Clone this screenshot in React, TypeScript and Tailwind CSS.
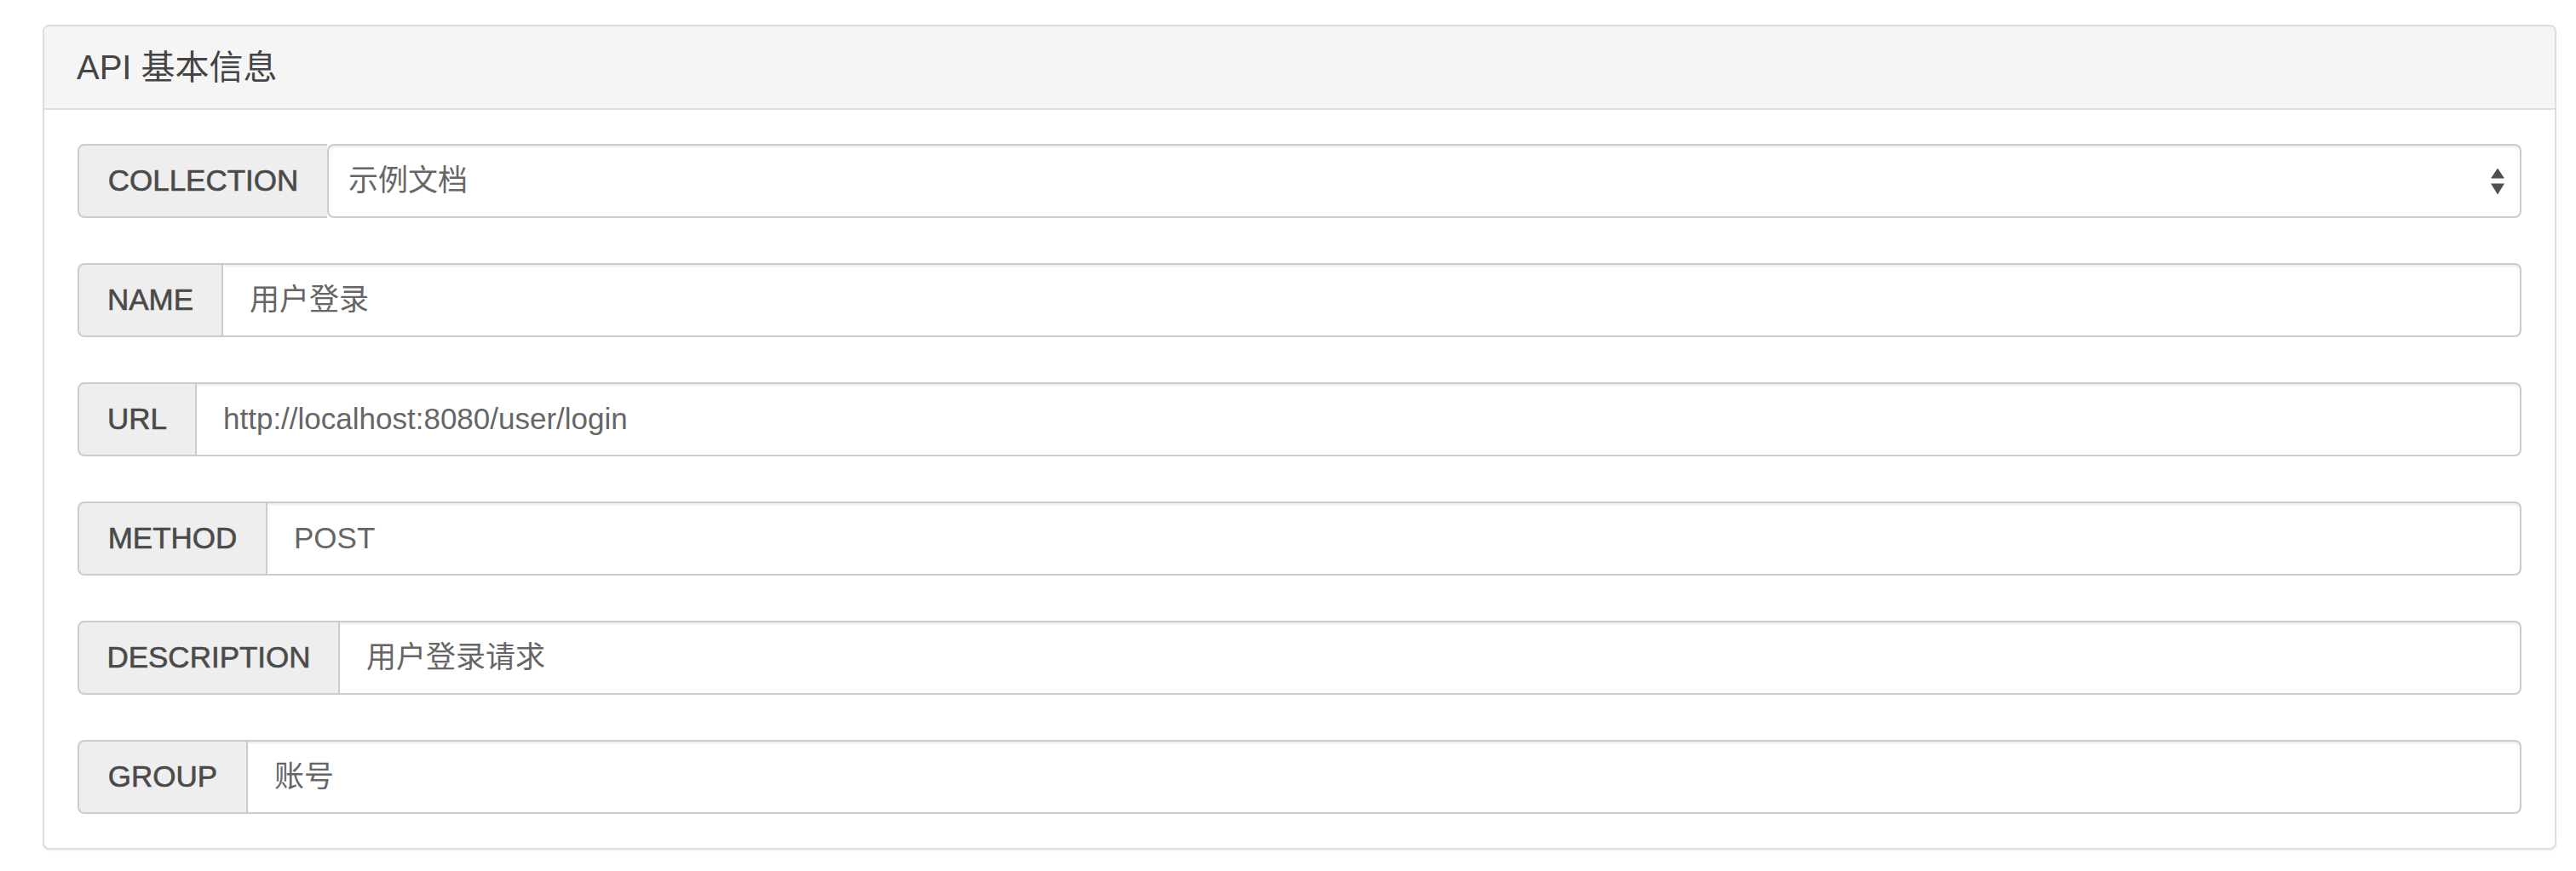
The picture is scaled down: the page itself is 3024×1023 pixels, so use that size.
import React from "react";

type Field = {
  label: string;
  value: string;
  addonWidth: string;
  select?: boolean;
};

const fields: Field[] = [
  { label: "COLLECTION", value: "示例文档", addonWidth: "w-[293px]", select: true },
  { label: "NAME", value: "用户登录", addonWidth: "w-[169px]" },
  { label: "URL", value: "http://localhost:8080/user/login", addonWidth: "w-[138px]" },
  { label: "METHOD", value: "POST", addonWidth: "w-[221px]" },
  { label: "DESCRIPTION", value: "用户登录请求", addonWidth: "w-[306px]" },
  { label: "GROUP", value: "账号", addonWidth: "w-[198px]" },
];

const fontStack =
  "font-['Liberation_Sans','Noto_Sans_CJK_SC',sans-serif]";

function SelectArrows() {
  return (
    <svg
      className="w-4 h-[31px]"
      viewBox="0 0 16 31"
      fill="#505050"
      aria-hidden="true"
    >
      <polygon points="0,12 8,0 16,12" />
      <polygon points="0,18 16,18 8,31" />
    </svg>
  );
}

function FieldRow({ field }: { field: Field }) {
  return (
    <div className="flex h-[87px]">
      {/* Label addon */}
      <div
        className={`${field.addonWidth} flex-shrink-0 flex items-center justify-center bg-[#eeeeee] border-2 border-r-0 border-[#cccccc] rounded-l-[8px] text-[35px] text-[#4a4a4a] [-webkit-text-stroke:0.6px_#4a4a4a]`}
      >
        {field.label}
      </div>

      {field.select ? (
        <div className="relative flex-1 flex items-center bg-white border-2 border-[#cccccc] rounded-[8px] shadow-[inset_0_2px_2px_rgba(0,0,0,0.075)] pl-[23px] text-[35px] text-[#666666]">
          {field.value}
          <div className="absolute right-[18px] top-1/2 -translate-y-1/2 flex">
            <SelectArrows />
          </div>
        </div>
      ) : (
        <input
          readOnly
          defaultValue={field.value}
          className={`flex-1 min-w-0 bg-white border-2 border-[#cccccc] rounded-r-[8px] shadow-[inset_0_2px_2px_rgba(0,0,0,0.075)] pl-[31px] text-[35px] text-[#666666] outline-none ${fontStack}`}
        />
      )}
    </div>
  );
}

export default function App() {
  return (
    <div
      className={`min-h-[1023px] w-[3024px] bg-white pt-[29px] pl-[50px] pr-[23px] ${fontStack}`}
    >
      <div className="border-2 border-[#dddddd] rounded-[8px] bg-white shadow-[0_2px_2px_rgba(0,0,0,0.05)]">
        {/* Panel heading */}
        <div className="h-[98px] flex items-center px-[38px] bg-[#f5f5f5] border-b-2 border-[#dddddd] rounded-t-[6px] text-[40px] text-[#444444]">
          API 基本信息
        </div>

        {/* Panel body */}
        <div className="flex flex-col gap-[53px] px-[39px] py-[40px]">
          {fields.map((f) => (
            <FieldRow key={f.label} field={f} />
          ))}
        </div>
      </div>
    </div>
  );
}
